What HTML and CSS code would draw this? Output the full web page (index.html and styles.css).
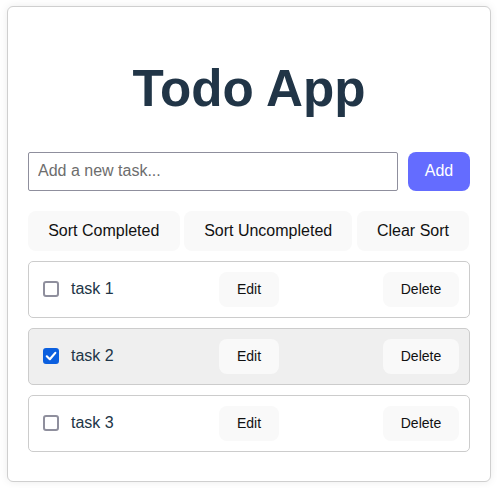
FILE: index.html
```html
<!DOCTYPE html>
<html lang="en">
<head>
<meta charset="utf-8">
<title>Todo App</title>
<link rel="stylesheet" href="styles.css">
</head>
<body>
<div class="card">
  <h1 class="title">Todo App</h1>
  <div class="add-row">
    <input class="new-task" type="text" placeholder="Add a new task...">
    <button class="add-btn">Add</button>
  </div>
  <div class="sort-row">
    <button class="btn">Sort Completed</button>
    <button class="btn">Sort Uncompleted</button>
    <button class="btn">Clear Sort</button>
  </div>
  <ul class="tasks">
    <li class="task">
      <label class="task-label">
        <span class="box"><input type="checkbox" class="check"></span>
        <span class="task-text">task 1</span>
      </label>
      <button class="btn small">Edit</button>
      <button class="btn small del">Delete</button>
    </li>
    <li class="task done">
      <label class="task-label">
        <span class="box"><input type="checkbox" class="check" checked>
          <svg class="tick" width="16" height="16" viewBox="0 0 16 16"><path d="M3.8 8.3 L6.8 11.2 L12.3 4.9" fill="none" stroke="#fff" stroke-width="2.2" stroke-linecap="round" stroke-linejoin="round"/></svg>
        </span>
        <span class="task-text">task 2</span>
      </label>
      <button class="btn small">Edit</button>
      <button class="btn small del">Delete</button>
    </li>
    <li class="task">
      <label class="task-label">
        <span class="box"><input type="checkbox" class="check"></span>
        <span class="task-text">task 3</span>
      </label>
      <button class="btn small">Edit</button>
      <button class="btn small del">Delete</button>
    </li>
  </ul>
</div>
</body>
</html>
```

FILE: styles.css
```css
html, body {
  margin: 0;
  padding: 0;
  background: #fff;
}
body {
  font-family: "Liberation Sans", Arial, sans-serif;
  color: #213547;
  padding: 6px 6px 6px 7px;
}
.card {
  width: 484px;
  box-sizing: border-box;
  border: 1px solid #cfcfcf;
  border-radius: 6px;
  padding: 20px 20px 19px;
  background: #fff;
  box-shadow: 0 0 8px rgba(0, 0, 0, 0.08);
}
.title {
  font-size: 51.2px;
  line-height: 1.1;
  font-weight: bold;
  text-align: center;
  margin: 34.3px 0;
  color: #213547;
}
.add-row {
  display: flex;
  gap: 10px;
  align-items: stretch;
  height: 39px;
}
.new-task {
  flex: 1;
  box-sizing: border-box;
  height: 39px;
  font-family: "Liberation Sans", Arial, sans-serif;
  font-size: 16px;
  padding: 0 9px;
  border: 1px solid #8f8f9d;
  border-radius: 2px;
  color: #213547;
  outline: none;
  margin: 0;
}
.new-task::placeholder {
  color: #6d6d6d;
}
.add-btn {
  box-sizing: border-box;
  height: 39px;
  font-family: "Liberation Sans", Arial, sans-serif;
  font-size: 16px;
  line-height: normal;
  padding: 0 16px;
  border: none;
  border-radius: 8px;
  background: #646cff;
  color: #fff;
  width: 62px;
  margin: 0;
}
.sort-row {
  display: flex;
  gap: 4.4px;
  margin-top: 20px;
}
.btn {
  box-sizing: border-box;
  height: 40px;
  font-family: "Liberation Sans", Arial, sans-serif;
  font-size: 16px;
  line-height: normal;
  padding: 0 1.2em;
  border: 1px solid transparent;
  border-radius: 8px;
  background: #f9f9f9;
  color: #111;
  margin: 0;
}
.tasks {
  list-style: none;
  margin: 10px 0 0;
  padding: 0;
}
.task {
  display: grid;
  grid-template-columns: 1fr auto 1fr;
  align-items: center;
  padding: 10px;
  border: 1px solid #cccccc;
  border-radius: 5px;
  margin-bottom: 10px;
  background: #fff;
}
.task.done {
  background: #efefef;
}
.task-label {
  display: flex;
  align-items: center;
  gap: 12px;
  font-size: 16px;
  color: #213547;
}
.box {
  display: grid;
  margin-left: 4px;
}
.box > * {
  grid-area: 1 / 1;
}
.check {
  appearance: none;
  -webkit-appearance: none;
  width: 16px;
  height: 16px;
  margin: 0;
  box-sizing: border-box;
  border: 2px solid #8f8f9d;
  border-radius: 3px;
  background: #fff;
}
.check:checked {
  background: #0b5fdf;
  border-color: #0b5fdf;
}
.tick {
  display: block;
}
.btn.small {
  height: 35px;
  font-size: 14px;
}
.btn.del {
  justify-self: end;
}
```
